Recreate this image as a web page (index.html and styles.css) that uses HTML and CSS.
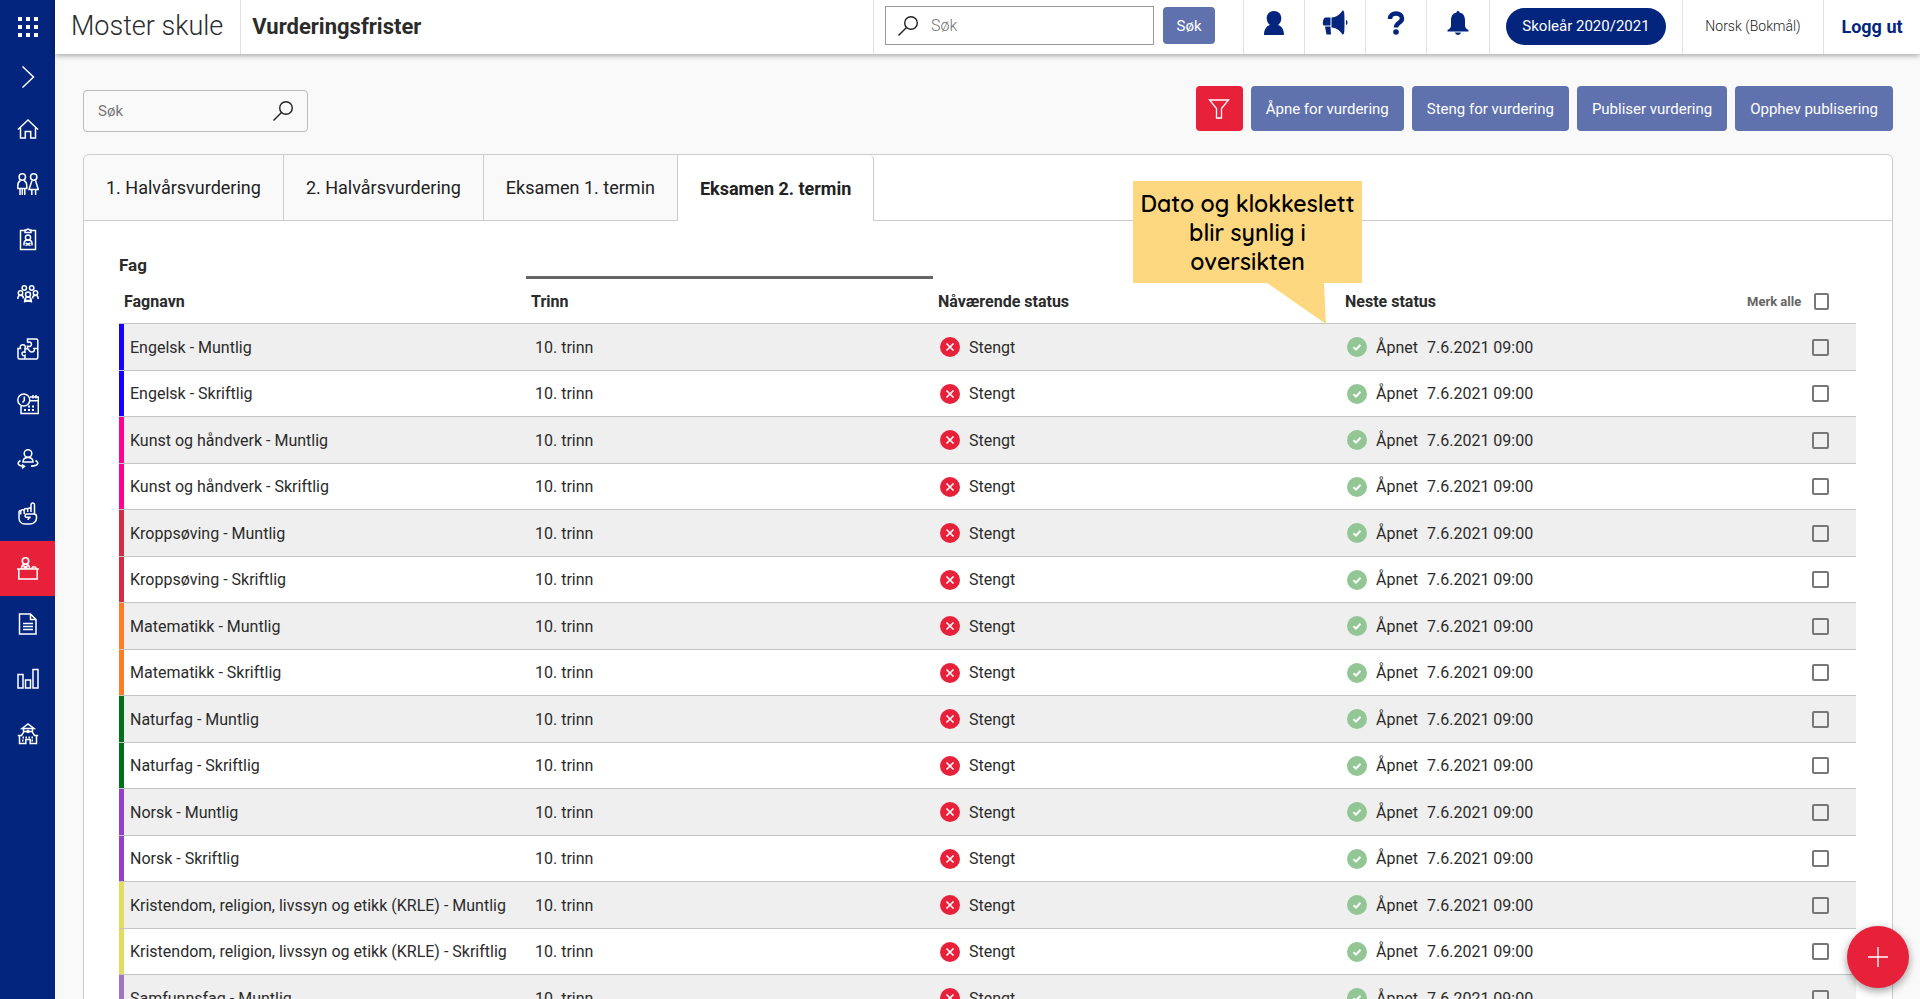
FILE: index.html
```html
<!DOCTYPE html>
<html lang="nb">
<head>
  <meta charset="UTF-8">
  <meta name="viewport" content="width=device-width, initial-scale=1.0">
  <title>Vurderingsfrister</title>
  <link rel="stylesheet" href="styles.css">
</head>
<body>

  <svg class="symbols" aria-hidden="true">
    <symbol id="search" viewBox="0 0 20 20"><circle cx="13" cy="7" r="6.3"/><path d="M8.5 11.5L.5 19.5"/></symbol>
    <symbol id="closed" viewBox="0 0 20 20"><circle cx="10" cy="10" r="10" fill="#e8213a"/><path d="M6.5 6.5l7 7M13.5 6.5l-7 7" stroke="#fff" stroke-width="1.6"/></symbol>
    <symbol id="open" viewBox="0 0 20 20"><circle cx="10" cy="10" r="10" fill="#93c695"/><path d="M6.5 10.2l2.5 2.4 4.5-4.8" fill="none" stroke="#fff" stroke-width="2"/></symbol>
  </svg>

  <nav class="sidebar">
    <a href="#" class="apps" aria-label="Apper">
      <svg width="20" height="20" viewBox="0 0 20 20" fill="#fff"><path d="M0 0h4v4H0zM8 0h4v4H8zM16 0h4v4h-4zM0 8h4v4H0zM8 8h4v4H8zM16 8h4v4h-4zM0 16h4v4H0zM8 16h4v4H8zM16 16h4v4h-4z"/></svg>
    </a>
    <a href="#" class="expand" aria-label="Utvid meny">
      <svg width="14" height="24" viewBox="0 0 14 24"><path d="M1.500 1.500L12.500 12 1.500 22.500"/></svg>
    </a>
    <a href="#" aria-label="Hjem">
      <svg width="22" height="22" viewBox="0 0 22 22"><path d="M1 11.500L11 2l10 9.500M3.500 9.500V20h4.800v-6.500h5.400V20h4.800V9.500"/></svg>
    </a>
    <a href="#" aria-label="Elever">
      <svg width="22" height="22" viewBox="0 0 22 22"><circle cx="5.300" cy="4" r="3.200"/><circle cx="16.700" cy="4" r="3.200"/><path d="M3.500 7.500C1.500 8.500.8 10.500.8 13v2.500h9V13c0-2.500-.8-4.500-2.700-5.500M3 15.500V22M5.300 16v6M7.800 15.500V22M15 7.500L12 16.500h9.300L18.500 7.500M14.800 16.500V22M18.600 16.500V22"/></svg>
    </a>
    <a href="#" aria-label="Ansatte">
      <svg width="20" height="24" viewBox="0 0 20 24"><path d="M7 3.500H2.500v19h15v-19H13M7 5.500V3h1.500a1.600 1.600 0 0 1 3 0H13v2.500zM6 18.500v-2c0-2 1.500-3.500 4-3.500s4 1.500 4 3.500v2M7.500 16l5 2.500M12.500 16l-5 2.500"/><circle cx="10" cy="10.500" r="2.600"/></svg>
    </a>
    <a href="#" aria-label="Grupper">
      <svg width="22" height="18" viewBox="0 0 22 18"><circle cx="7.300" cy="3" r="2.200"/><circle cx="14.700" cy="3" r="2.200"/><circle cx="3.500" cy="8" r="2.200"/><circle cx="18.500" cy="8" r="2.200"/><circle cx="11" cy="9.500" r="2.500"/><path d="M.8 14c0-2.500 1-3.800 2.700-3.800S6.500 11 6.500 13.500M21.200 14c0-2.500-1-3.800-2.700-3.800s-3 .8-3 3.300M7.500 17.500c0-3.500 1-5.500 3.500-5.500s3.500 2 3.500 5.500M8.500 15l5 1.500M13.500 15l-5 1.500"/></svg>
    </a>
    <a href="#" aria-label="Fag">
      <svg width="22" height="22" viewBox="0 0 22 22"><path d="M10.500 4.500V1h8.800c1 0 1.500.5 1.500 1.500v17c0 1-.5 1.500-1.500 1.500H2.500C1.500 21 1 20.500 1 19.500V10.500h2.500C2.500 8 4 6.800 5.800 6.800S9 8 8 10.500M10.500 4.500c2-1 4-.2 4 1.700s-1.800 2.800-4 2v2.500H8v3.500c-1.800-.8-3.200 0-3 1.800.2 1.600 1.800 2 3 1.300V21M10.500 10.700c2 1.200 1.500 3.300 4 3.300s3.500-1.500 2.500-3.500h3.500"/></svg>
    </a>
    <a href="#" aria-label="Timeplan">
      <svg width="22" height="22" viewBox="0 0 22 22"><circle cx="6.800" cy="7" r="6"/><path d="M7.300 3.500v4L5.500 9.500M13 4h8.300v16.500H4V13M13 7.800h8M16 2v3.500M19 2v3.500"/><path d="M7 17h12M11 13.500h8" stroke-width="2" stroke-dasharray="2 2"/></svg>
    </a>
    <a href="#" aria-label="Oppfølging">
      <svg width="22" height="20" viewBox="0 0 22 20"><circle cx="11" cy="4.500" r="3.800"/><path d="M6 13c0-3 1.500-4.500 5-4.500s5 1.500 5 4.500zM3.500 11.500C-.5 14 .5 16.500 7 17.300M18.500 11.500c4 2.500 3 5-4.500 5.800M5 15.500l2.500 1.800L5 19.300"/></svg>
    </a>
    <a href="#" aria-label="Anmerkninger">
      <svg width="20" height="23" viewBox="0 0 20 23"><path d="M16.500 12V2.800c0-2.400-3.500-2.400-3.500 0V10M13 9V7.500c0-2-3.300-2-3.300 0V10M9.700 8c0-2-3.500-2-3.500 0v4M6.200 9c-.5-1.800-3.500-1.500-3.500.5M2.700 8.500c-1.200 0-1.700.8-1.700 2v5.500c0 3.500 2.500 6 6 6h5c3.500 0 6.500-2.500 6.500-6v-1.500c0-1.800-1-2.500-2.500-2.500H9c-2.500 0-2.500 3.300 0 3.300h3.500c-1.500.5-2.500 1.300-2.500 2.700M2.700 9v3.500"/></svg>
    </a>
    <a href="#" class="active" aria-label="Vurdering">
      <svg width="22" height="23" viewBox="0 0 22 23"><circle cx="8.500" cy="4" r="3.200"/><path d="M4.500 11.500c0-3 1.300-4.300 4-4.300s4 1.300 4 4.300M6.500 9l4 2.500M10.500 9l-4 2.500M0 12h22M1.800 12v10h18.400V12M15 11.500c0-2.500 4-2.500 4 0"/></svg>
    </a>
    <a href="#" aria-label="Dokumenter">
      <svg width="20" height="22" viewBox="0 0 20 22"><path d="M1.500 1h11l5.500 5.500V21H1.500zM12.500 1v5.500H18M5 10.500h10M5 13.500h10M5 16.500h10"/></svg>
    </a>
    <a href="#" aria-label="Statistikk">
      <svg width="22" height="22" viewBox="0 0 22 22"><path d="M1 6.500h5V20H1zM8.500 12h5v8h-5zM16 1.500h5V20h-5z"/></svg>
    </a>
    <a href="#" aria-label="Skole">
      <svg width="22" height="22" viewBox="0 0 22 22"><path d="M6.500 8.500V5M15.500 8.500V5M5 5.500l6-4.500 6 4.500zM2.500 12.500v8h6.300v-4h4.400v4h6.300v-8M.8 12.500h3.700L7 8.500h8l2.500 4h3.700"/><circle cx="11" cy="8.500" r="1"/><path d="M5.500 14.500h11M5 17.500h2.500M14.500 17.500H17" stroke-width="2" stroke-dasharray="1.500 1.500"/></svg>
    </a>
  </nav>

  <div class="page">
    <header class="topbar">
      <div class="school">Moster skule</div>
      <h1>Vurderingsfrister</h1>
      <form class="global-search">
        <div class="field">
          <svg width="20" height="20"><use href="#search"/></svg>
          <input type="search" placeholder="Søk" aria-label="Søk">
        </div>
        <button type="button">Søk</button>
      </form>
      <a href="#" class="tool profile" aria-label="Profil">
        <svg width="22" height="24" viewBox="0 0 22 24"><path d="M11 0c4.300 0 7.300 3 7.300 7.200 0 3-1.300 5.300-3.300 6.700 3.800 1.200 6 4.600 6 10.100H1c0-5.500 2.200-8.900 6-10.100-2-1.400-3.300-3.700-3.300-6.700C3.700 3 6.700 0 11 0z"/></svg>
      </a>
      <a href="#" class="tool news" aria-label="Nyheter">
        <svg width="26" height="26" viewBox="0 0 26 26"><path d="M9.500 7.500c4.500 0 8.500-3 11-7 1.800 0 2 1.500 2 12s-.2 12-2 12c-2.500-4-6.500-7-11-7zM3 7.500h5.500v8H1.500C.5 14.500.5 9 3 7.500zM3 16.500h5.500l.5 8H4.500zM24 10c2 .3 2 4.700 0 5z"/></svg>
      </a>
      <a href="#" class="tool help" aria-label="Hjelp">
        <svg width="18" height="24" viewBox="0 0 18 24"><path d="M3 8c0-3.500 2.500-5.500 6-5.500s6 1.800 6 5c0 4.500-6 4-6 9" fill="none" stroke="#03257e" stroke-width="4.500"/><circle cx="9" cy="21" r="2.800"/></svg>
      </a>
      <a href="#" class="tool alerts" aria-label="Varsler">
        <svg width="22" height="25" viewBox="0 0 22 25"><path d="M9.500 1.500c0-2 3-2 3 0 4 .7 5.500 4 5.500 8v5c0 2.500 1.500 3.500 3.500 4.500v1.500H.5V19C2.500 18 4 17 4 14.500v-5c0-4 1.500-7.300 5.500-8zM8 21.500h6c-.5 3.300-5.500 3.300-6 0z"/></svg>
      </a>
      <div class="year"><button type="button">Skoleår 2020/2021</button></div>
      <a href="#" class="language">Norsk (Bokmål)</a>
      <a href="#" class="logout">Logg ut</a>
    </header>

    <main>
      <div class="toolbar">
        <div class="filter-search">
          <input type="search" placeholder="Søk" aria-label="Søk i fag">
          <svg width="20" height="20"><use href="#search"/></svg>
        </div>
        <div class="actions">
          <button type="button" class="filter" aria-label="Filter">
            <svg width="22" height="20" viewBox="0 0 22 20"><path d="M1.500 1h19L13.500 9.500V19h-5V9.500z"/></svg>
          </button>
          <button type="button">Åpne for vurdering</button>
          <button type="button">Steng for vurdering</button>
          <button type="button">Publiser vurdering</button>
          <button type="button">Opphev publisering</button>
        </div>
      </div>

      <section class="panel">
        <div class="tabs" role="tablist">
          <button type="button" role="tab">1. Halvårsvurdering</button>
          <button type="button" role="tab">2. Halvårsvurdering</button>
          <button type="button" role="tab">Eksamen 1. termin</button>
          <button type="button" role="tab" class="selected" aria-selected="true">Eksamen 2. termin</button>
        </div>

        <div class="subjects">
          <table>
            <thead>
              <tr class="group"><th>Fag</th><th class="line"></th><th></th><th></th><th></th></tr>
              <tr class="columns">
                <th>Fagnavn</th><th>Trinn</th><th>Nåværende status</th><th class="next">Neste status
                  <div class="callout">Dato og klokkeslett blir synlig i oversikten
                    <svg width="60" height="41" viewBox="0 0 60 41"><path d="M0 0h57l2 41z"/></svg>
                  </div>
                </th>
                <th><label class="all">Merk alle <input type="checkbox"></label></th>
              </tr>
            </thead>
            <tbody id="rows"></tbody>
          </table>
        </div>
      </section>
    </main>
  </div>

  <button type="button" class="add" aria-label="Legg til">
    <svg width="20" height="20" viewBox="0 0 20 20"><path d="M10 0v20M0 10h20"/></svg>
  </button>

  <script>
    const subjects = [
      ["Engelsk", "#1a00ff"],
      ["Kunst og håndverk", "#ff0090"],
      ["Kroppsøving", "#d62b44"],
      ["Matematikk", "#ff7d26"],
      ["Naturfag", "#00701a"],
      ["Norsk", "#9440c8"],
      ["Kristendom, religion, livssyn og etikk (KRLE)", "#e2dc5f"],
      ["Samfunnsfag", "#a374c0"]
    ];
    const rows = document.getElementById("rows");

    subjects.forEach(([subject, color]) => {
      ["Muntlig", "Skriftlig"].forEach((exam) => {
        const name = `${subject} - ${exam}`;
        rows.insertAdjacentHTML("beforeend", `
          <tr>
            <td class="name" style="--subject: ${color}">${name}</td>
            <td class="grade">10. trinn</td>
            <td><span class="status"><svg width="20" height="20"><use href="#closed"/></svg>Stengt</span></td>
            <td><span class="status"><svg width="20" height="20"><use href="#open"/></svg>Åpnet <time>7.6.2021 09:00</time></span></td>
            <td class="pick"><input type="checkbox" aria-label="${name}"></td>
          </tr>`);
      });
    });
  </script>

</body>
</html>
```
FILE: styles.css
```css
* {
  box-sizing: border-box;
}

body {
  margin: 0;
  display: flex;
  height: 100vh;
  overflow: hidden;
  font-family: Roboto, Arial, sans-serif;
  font-size: 16px;
  color: #2b2b2b;
  background: #f9f9f9;
}

button, input {
  font-family: inherit;
  font-size: 16px;
}

button {
  cursor: pointer;
}

a {
  text-decoration: none;
}

.symbols {
  position: absolute;
  width: 0;
  height: 0;
}

#search {
  fill: none;
  stroke: #222;
  stroke-width: 1.4;
}

/* sidebar */
.sidebar {
  flex: none;
  width: 55px;
  background: #03257e;
}

.sidebar a {
  display: flex;
  align-items: center;
  justify-content: center;
  height: 55px;
}

.sidebar .apps {
  height: 53px;
}

.sidebar .expand {
  height: 48px;
}

.sidebar .active {
  background: #e8213a;
}

.sidebar svg {
  fill: none;
  stroke: #fff;
  stroke-width: 1.5;
}

.sidebar .apps svg {
  fill: #fff;
  stroke: none;
}

.page {
  flex: 1;
  min-width: 0;
}

/* top bar */
.topbar {
  position: relative;
  display: flex;
  height: 54px;
  background: #fff;
  box-shadow: 0 1px 6px rgba(0, 0, 0, 0.4);
}

.topbar > * {
  display: flex;
  align-items: center;
  justify-content: center;
  padding-bottom: 2px;
  border-left: 1px solid #e2e2e2;
}

.topbar .school {
  padding: 0 17px 2px 16px;
  border: none;
  font-size: 27px;
  font-weight: 300;
}

h1 {
  flex: 1;
  margin: 0;
  padding-left: 11px;
  font-size: 22px;
  font-weight: 700;
}

.topbar h1 {
  justify-content: flex-start;
}

.topbar .global-search {
  width: 370px;
  gap: 9px;
  padding: 0 28px 3px 11px;
}

.field {
  flex: 1;
  display: flex;
  align-items: center;
  gap: 13px;
  height: 39px;
  padding: 0 12px;
  border: 1px solid #999;
}

.field input {
  flex: 1;
  min-width: 0;
  padding: 0;
  border: none;
  outline: none;
  font-weight: 300;
}

input::placeholder {
  color: #757575;
}

.global-search button {
  width: 52px;
  height: 37px;
  padding: 0;
  border: none;
  border-radius: 4px;
  font-size: 15px;
  color: #fff;
  background: #5f72ad;
}

.topbar .tool {
  width: 61px;
  padding-bottom: 8px;
  fill: #03257e;
}

.topbar .alerts {
  width: 63px;
}

.year {
  width: 193px;
}

.year button {
  height: 37px;
  padding: 0 16px;
  border: none;
  border-radius: 19px;
  font-size: 15px;
  color: #fff;
  background: #03257e;
}

.language {
  width: 141px;
  font-size: 14px;
  font-weight: 300;
  color: #222;
}

.logout {
  width: 97px;
  font-size: 18px;
  font-weight: 700;
  color: #03257e;
}

/* content */
main {
  padding: 32px 27px 0 28px;
}

.toolbar {
  display: flex;
  justify-content: space-between;
  margin-bottom: 22px;
}

.filter-search {
  display: flex;
  align-items: center;
  width: 225px;
  height: 42px;
  margin-top: 4px;
  padding: 0 14px;
  border: 1px solid #bbb;
  border-radius: 4px;
}

.filter-search input {
  flex: 1;
  min-width: 0;
  padding: 0;
  border: none;
  outline: none;
  font-size: 15px;
  background: none;
}

.actions {
  display: flex;
  gap: 8px;
}

.actions button {
  height: 45px;
  padding: 0 15px;
  border: none;
  border-radius: 4px;
  font-size: 15px;
  color: #fff;
  background: #5f72ad;
}

.actions .filter {
  width: 47px;
  padding: 0;
  background: #e8213a;
}

.filter svg {
  display: block;
  margin: 0 auto;
  fill: none;
  stroke: #fff;
  stroke-width: 1.3;
}

.panel {
  border: 1px solid #ccc;
  border-radius: 6px 6px 0 0;
  background: #fff;
}

.tabs {
  display: flex;
  height: 66px;
  border-bottom: 1px solid #ccc;
}

.tabs button {
  padding: 0 22px;
  border: none;
  border-right: 1px solid #ccc;
  font-size: 18px;
  color: #222;
  background: #f9f9f9;
}

.tabs button:first-child {
  border-top-left-radius: 6px;
}

.tabs .selected {
  margin-bottom: -1px;
  border-radius: 0 5px 0 0;
  font-weight: 700;
  background: #fff;
}

.subjects {
  padding: 28px 36px 0 35px;
}

table {
  width: 100%;
  table-layout: fixed;
  border-collapse: separate;
  border-spacing: 0;
}

th, td {
  padding: 0;
  text-align: left;
}

th:last-child {
  width: 109px;
}

.group th {
  height: 30px;
  padding-top: 2px;
  font-size: 17px;
}

.group .line {
  border-bottom: 3px solid #666;
}

.columns th {
  height: 45px;
  padding-left: 5px;
  border-bottom: 1px solid #c4c4c4;
}

.columns th:last-child {
  padding: 0 27px 0 0;
}

.all {
  display: flex;
  align-items: center;
  justify-content: flex-end;
  gap: 13px;
  font-size: 13px;
  white-space: nowrap;
  color: #666;
}

input[type="checkbox"] {
  appearance: none;
  display: block;
  width: 17px;
  height: 17px;
  margin: 0;
  border: 2px solid #777;
  border-radius: 2px;
}

tbody td {
  height: 46px;
  border-bottom: 1px solid #c4c4c4;
}

tbody tr:nth-child(odd) td {
  height: 47px;
  background: #efefef;
}

.name {
  padding-left: 11px;
  box-shadow: inset 5px 0 var(--subject);
}

td.grade {
  padding-left: 9px;
}

.status {
  display: flex;
  align-items: center;
  gap: 9px;
  padding-left: 7px;
}

td.pick {
  padding-left: 65px;
}

/* note above the next status column */
.next {
  position: relative;
}

.callout {
  position: absolute;
  right: 385px;
  bottom: 40px;
  width: 229px;
  padding: 8px 4px 7px;
  font-family: Quicksand, Lato, sans-serif;
  font-size: 23px;
  font-weight: 600;
  line-height: 29px;
  text-align: center;
  color: #000;
  background: #fdd881;
}

.callout svg {
  position: absolute;
  left: 134px;
  top: 100%;
  fill: #fdd881;
}

.add {
  position: fixed;
  right: 11px;
  bottom: 11px;
  width: 62px;
  height: 62px;
  border: none;
  border-radius: 50%;
  background: #e8213a;
  box-shadow: 0 3px 8px rgba(0, 0, 0, 0.4);
}

.add svg {
  display: block;
  margin: 0 auto;
  stroke: #fff;
  stroke-width: 1.3;
}
```
